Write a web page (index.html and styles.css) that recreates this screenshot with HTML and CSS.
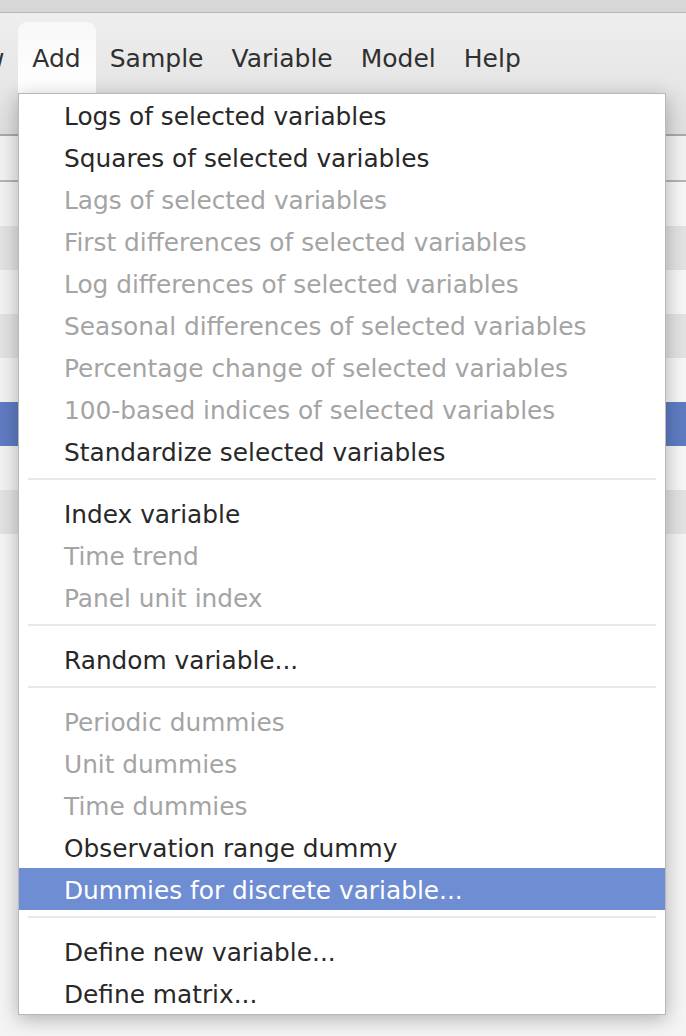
FILE: index.html
```html
<!DOCTYPE html>
<html>
<head>
<meta charset="utf-8">
<link rel="stylesheet" href="styles.css">
</head>
<body>
<div class="window">
  <div class="titlebar"></div>
  <div class="toolbar">
    <nav class="menubar">
      <span class="mb-item">View</span>
      <span class="mb-item active">Add</span>
      <span class="mb-item">Sample</span>
      <span class="mb-item">Variable</span>
      <span class="mb-item">Model</span>
      <span class="mb-item">Help</span>
    </nav>
  </div>
  <div class="header"></div>
  <div class="rows">
    <div class="row"></div>
    <div class="row alt"></div>
    <div class="row"></div>
    <div class="row alt"></div>
    <div class="row"></div>
    <div class="row sel"></div>
    <div class="row"></div>
    <div class="row alt"></div>
  </div>

  <div class="menu">
    <div class="mi">Logs of selected variables</div>
    <div class="mi">Squares of selected variables</div>
    <div class="mi dis">Lags of selected variables</div>
    <div class="mi dis">First differences of selected variables</div>
    <div class="mi dis">Log differences of selected variables</div>
    <div class="mi dis">Seasonal differences of selected variables</div>
    <div class="mi dis">Percentage change of selected variables</div>
    <div class="mi dis">100-based indices of selected variables</div>
    <div class="mi">Standardize selected variables</div>
    <div class="sep"></div>
    <div class="mi">Index variable</div>
    <div class="mi dis">Time trend</div>
    <div class="mi dis">Panel unit index</div>
    <div class="sep"></div>
    <div class="mi">Random variable...</div>
    <div class="sep"></div>
    <div class="mi dis">Periodic dummies</div>
    <div class="mi dis">Unit dummies</div>
    <div class="mi dis">Time dummies</div>
    <div class="mi">Observation range dummy</div>
    <div class="mi hl">Dummies for discrete variable...</div>
    <div class="sep"></div>
    <div class="mi">Define new variable...</div>
    <div class="mi">Define matrix...</div>
  </div>
</div>
</body>
</html>
```
FILE: styles.css
```css
html, body {
  margin: 0;
  padding: 0;
}
body {
  width: 686px;
  height: 1036px;
  overflow: hidden;
  background: #f4f4f4;
  font-family: "DejaVu Sans", "Liberation Sans", sans-serif;
}
.window {
  position: relative;
  height: 1036px;
  overflow: hidden;
}
.titlebar {
  height: 12px;
  background: #d7d7d7;
  border-bottom: 1px solid #b4b4b4;
}
.toolbar {
  height: 123px;
  box-sizing: border-box;
  padding-top: 9px;
  background: linear-gradient(#eeeeee, #e6e6e6 60%, #dedede);
  border-bottom: 2px solid #a9a9a9;
}
.menubar {
  display: flex;
  margin-left: -69px;
}
.mb-item {
  height: 71px;
  padding: 0 14px;
  line-height: 73px;
  font-size: 25px;
  color: #303030;
  border-radius: 9px 9px 0 0;
}
.mb-item.active {
  padding: 0 15px 0 14px;
  background: linear-gradient(#f8f8f8, #ffffff);
}
.header {
  height: 44px;
  background: #f1f1f1;
  border-bottom: 2px solid #b3b3b3;
}
.row {
  height: 44px;
  background: linear-gradient(90deg, #f2f2f2, #f6f6f6);
}
.row.alt {
  background: #e2e2e2;
}
.row.sel {
  background: #5f7cc2;
}
.menu {
  position: absolute;
  left: 18px;
  top: 93px;
  width: 648px;
  box-sizing: border-box;
  background: #ffffff;
  border: 1px solid #b8b8b8;
  box-shadow: 0 4px 18px rgba(0, 0, 0, 0.28);
}
.mi {
  height: 42px;
  box-sizing: border-box;
  padding: 4px 0 0 45px;
  line-height: 38px;
  font-size: 24.8px;
  color: #282828;
  white-space: nowrap;
}
.mi.dis {
  color: #a4a4a4;
}
.mi.hl {
  background: #6f8dd3;
  color: #ffffff;
}
.sep {
  height: 20px;
  box-sizing: border-box;
  padding-top: 6px;
  margin: 0 9px;
}
.sep::before {
  content: "";
  display: block;
  height: 2px;
  background: #e8e8e8;
}
```
